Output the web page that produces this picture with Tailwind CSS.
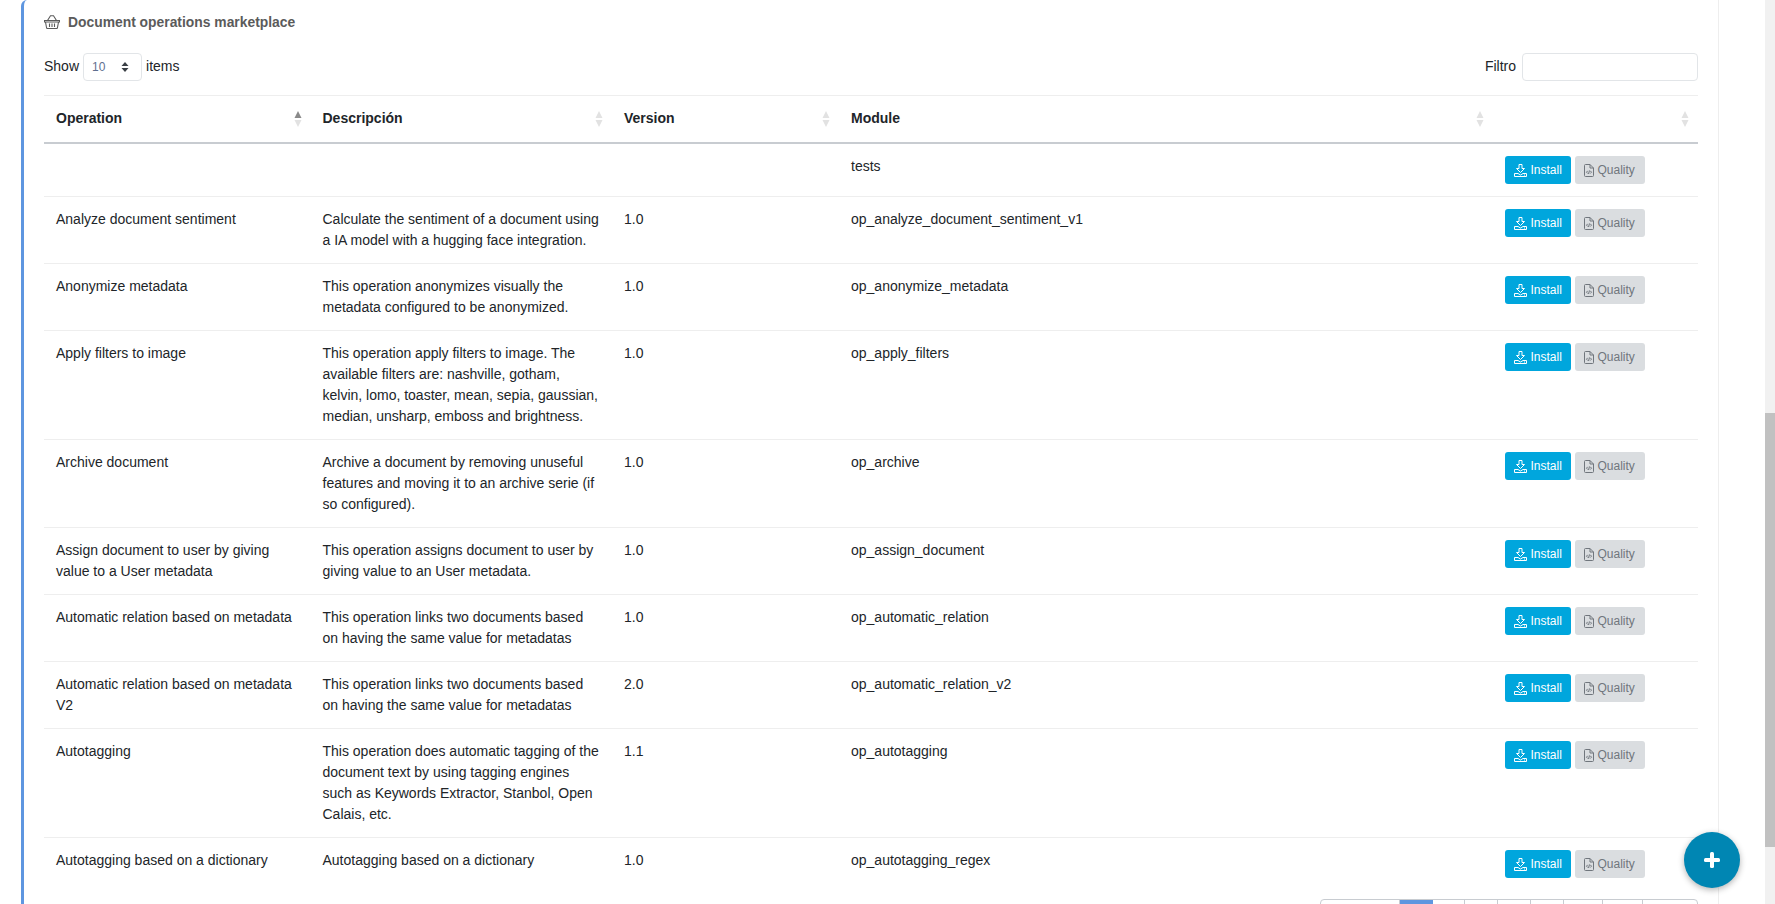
<!DOCTYPE html>
<html lang="es">
<head>
<meta charset="utf-8">
<script src="https://cdn.jsdelivr.net/npm/@tailwindcss/browser@4"></script>
<title>Document operations marketplace</title>
</head>
<body class="bg-white">
<div class="relative h-[904px] w-[1775px] overflow-hidden flex font-['Liberation_Sans',Arial,sans-serif] text-[14px] leading-[21px] text-[#212529]">
  <main class="ml-[21px] w-[1698px] h-[1000px] shrink-0 border-l-[3px] border-l-[#5e96e0] border-r border-r-[#eeeeee] rounded-tl-[6px] pl-[20px] pr-[20px]">
    <h2 class="h-[53px] pt-[12px] flex items-start gap-[8px] font-bold text-[13.86px] leading-[21px] text-[#5b5b5b]">
      <svg class="mt-[3px]" width="16" height="14" viewBox="0 0 16 14" fill="none" stroke="#5b5b5b" stroke-width="1.1"><path d="M.5 5.500h15v1.500H.5zM1.500 7l1 5.500a1 1 0 0 0 1 1h9a1 1 0 0 0 1-1l1-5.500M3.500 5.500 6.500 .8h3l3 4.700M5.500 8.500v3.500M8 8.500v3.500M10.500 8.500v3.500"/></svg>
      Document operations marketplace
    </h2>
    <div class="flex items-center justify-between h-[28px]">
      <div class="flex items-center gap-[4px]">
        <span class="mb-[2px]">Show</span>
        <span class="relative w-[59px] h-[28px] border border-[#e2e5e8] rounded-[4px] pl-[8px] text-[12px] leading-[26px] text-[#5f6f8f]">10
          <svg class="absolute left-[37px] top-[8px]" width="8" height="10" viewBox="0 0 8 10" fill="#3a3f45"><path d="M4 0l3.500 4H.5zM4 10 .5 6h7z"/></svg>
        </span>
        <span class="mb-[2px]">items</span>
      </div>
      <div class="flex items-center gap-[6px]">
        <span class="mb-[2px]">Filtro</span>
        <input aria-label="Filtro" class="w-[176px] h-[28px] border border-[#e2e5e8] rounded-[4px] bg-white">
      </div>
    </div>
    <table class="mt-[14px] w-[1654px] table-fixed border-separate border-spacing-0">
      <colgroup>
        <col class="w-[266.500px]"><col class="w-[301.500px]"><col class="w-[227px]"><col class="w-[654px]"><col class="w-[205px]">
      </colgroup>
      <thead>
        <tr class="text-left font-bold">
          <th class="relative border-t border-t-[#eeeeee] border-b-2 border-b-[#c8ccd1] p-[12px] pb-[13px]">Operation
            <svg class="absolute right-[9px] top-[15px]" width="8" height="16" viewBox="0 0 8 16"><path d="M4 0l3.500 7H.5z" fill="#8a8a8a"/><path d="M4 16 .5 9h7z" fill="#e2e2e2"/></svg>
          </th>
          <th class="relative border-t border-t-[#eeeeee] border-b-2 border-b-[#c8ccd1] p-[12px] pb-[13px]">Descripción
            <svg class="absolute right-[9px] top-[15px]" width="8" height="16" viewBox="0 0 8 16"><path d="M4 0l3.500 7H.5zM4 16 .5 9h7z" fill="#e2e2e2"/></svg>
          </th>
          <th class="relative border-t border-t-[#eeeeee] border-b-2 border-b-[#c8ccd1] p-[12px] pb-[13px]">Version
            <svg class="absolute right-[9px] top-[15px]" width="8" height="16" viewBox="0 0 8 16"><path d="M4 0l3.500 7H.5zM4 16 .5 9h7z" fill="#e2e2e2"/></svg>
          </th>
          <th class="relative border-t border-t-[#eeeeee] border-b-2 border-b-[#c8ccd1] p-[12px] pb-[13px]">Module
            <svg class="absolute right-[9px] top-[15px]" width="8" height="16" viewBox="0 0 8 16"><path d="M4 0l3.500 7H.5zM4 16 .5 9h7z" fill="#e2e2e2"/></svg>
          </th>
          <th class="relative border-t border-t-[#eeeeee] border-b-2 border-b-[#c8ccd1] p-[12px] pb-[13px]">
            <svg class="absolute right-[9px] top-[15px]" width="8" height="16" viewBox="0 0 8 16"><path d="M4 0l3.500 7H.5zM4 16 .5 9h7z" fill="#e2e2e2"/></svg>
          </th>
        </tr>
      </thead>
      <tbody class="[&_td]:border-b [&_td]:border-b-[#eeeeee] [&_td]:p-[12px] [&_td]:align-top">
        <tr><td></td><td></td><td></td><td>tests</td><td>
          <div class="flex gap-[4px]"><button class="flex items-center gap-[3.500px] h-[28px] w-[66px] pl-[9px] rounded-[3px] bg-[#00a6dd] text-white text-[12px]"><svg width="13" height="13" viewBox="0 0 13 13" fill="none" stroke="currentColor" stroke-width="1"><path d="M5 .5h3v4h2.500L6.500 8.500 2.500 4.500H5zM.5 9.500h3.500l2.500 1.500 2.500-1.500h3.500v3h-12zM10 11h1"/></svg>Install</button><button class="flex items-center gap-[3.500px] h-[28px] w-[70px] pl-[9px] rounded-[3px] bg-[#dadde0] text-[#70767d] text-[12px]"><svg width="10" height="13" viewBox="0 0 10 13" fill="none" stroke="currentColor" stroke-width="1"><path d="M1.500 .5h4.500l3.500 3.500v7.500a1 1 0 0 1-1 1h-7a1 1 0 0 1-1-1v-10a1 1 0 0 1 1-1zM6 .5V4h3.500M3.700 6.800 2.500 8.200l1.200 1.300M6.300 6.800l1.200 1.400-1.200 1.300M5.500 6.500l-1 3.500"/></svg>Quality</button></div>
        </td></tr>
        <tr><td>Analyze document sentiment</td><td>Calculate the sentiment of a document using a IA model with a hugging face integration.</td><td>1.0</td><td>op_analyze_document_sentiment_v1</td><td>
          <div class="flex gap-[4px]"><button class="flex items-center gap-[3.500px] h-[28px] w-[66px] pl-[9px] rounded-[3px] bg-[#00a6dd] text-white text-[12px]"><svg width="13" height="13" viewBox="0 0 13 13" fill="none" stroke="currentColor" stroke-width="1"><path d="M5 .5h3v4h2.500L6.500 8.500 2.500 4.500H5zM.5 9.500h3.500l2.500 1.500 2.500-1.500h3.500v3h-12zM10 11h1"/></svg>Install</button><button class="flex items-center gap-[3.500px] h-[28px] w-[70px] pl-[9px] rounded-[3px] bg-[#dadde0] text-[#70767d] text-[12px]"><svg width="10" height="13" viewBox="0 0 10 13" fill="none" stroke="currentColor" stroke-width="1"><path d="M1.500 .5h4.500l3.500 3.500v7.500a1 1 0 0 1-1 1h-7a1 1 0 0 1-1-1v-10a1 1 0 0 1 1-1zM6 .5V4h3.500M3.700 6.800 2.500 8.200l1.200 1.300M6.300 6.800l1.200 1.400-1.200 1.300M5.500 6.500l-1 3.500"/></svg>Quality</button></div>
        </td></tr>
        <tr><td>Anonymize metadata</td><td>This operation anonymizes visually the metadata configured to be anonymized.</td><td>1.0</td><td>op_anonymize_metadata</td><td>
          <div class="flex gap-[4px]"><button class="flex items-center gap-[3.500px] h-[28px] w-[66px] pl-[9px] rounded-[3px] bg-[#00a6dd] text-white text-[12px]"><svg width="13" height="13" viewBox="0 0 13 13" fill="none" stroke="currentColor" stroke-width="1"><path d="M5 .5h3v4h2.500L6.500 8.500 2.500 4.500H5zM.5 9.500h3.500l2.500 1.500 2.500-1.500h3.500v3h-12zM10 11h1"/></svg>Install</button><button class="flex items-center gap-[3.500px] h-[28px] w-[70px] pl-[9px] rounded-[3px] bg-[#dadde0] text-[#70767d] text-[12px]"><svg width="10" height="13" viewBox="0 0 10 13" fill="none" stroke="currentColor" stroke-width="1"><path d="M1.500 .5h4.500l3.500 3.500v7.500a1 1 0 0 1-1 1h-7a1 1 0 0 1-1-1v-10a1 1 0 0 1 1-1zM6 .5V4h3.500M3.700 6.800 2.500 8.200l1.200 1.300M6.300 6.800l1.200 1.400-1.200 1.300M5.500 6.500l-1 3.500"/></svg>Quality</button></div>
        </td></tr>
        <tr><td>Apply filters to image</td><td>This operation apply filters to image. The available filters are: nashville, gotham, kelvin, lomo, toaster, mean, sepia, gaussian, median, unsharp, emboss and brightness.</td><td>1.0</td><td>op_apply_filters</td><td>
          <div class="flex gap-[4px]"><button class="flex items-center gap-[3.500px] h-[28px] w-[66px] pl-[9px] rounded-[3px] bg-[#00a6dd] text-white text-[12px]"><svg width="13" height="13" viewBox="0 0 13 13" fill="none" stroke="currentColor" stroke-width="1"><path d="M5 .5h3v4h2.500L6.500 8.500 2.500 4.500H5zM.5 9.500h3.500l2.500 1.500 2.500-1.500h3.500v3h-12zM10 11h1"/></svg>Install</button><button class="flex items-center gap-[3.500px] h-[28px] w-[70px] pl-[9px] rounded-[3px] bg-[#dadde0] text-[#70767d] text-[12px]"><svg width="10" height="13" viewBox="0 0 10 13" fill="none" stroke="currentColor" stroke-width="1"><path d="M1.500 .5h4.500l3.500 3.500v7.500a1 1 0 0 1-1 1h-7a1 1 0 0 1-1-1v-10a1 1 0 0 1 1-1zM6 .5V4h3.500M3.700 6.800 2.500 8.200l1.200 1.300M6.300 6.800l1.200 1.400-1.200 1.300M5.500 6.500l-1 3.500"/></svg>Quality</button></div>
        </td></tr>
        <tr><td>Archive document</td><td>Archive a document by removing unuseful features and moving it to an archive serie (if so configured).</td><td>1.0</td><td>op_archive</td><td>
          <div class="flex gap-[4px]"><button class="flex items-center gap-[3.500px] h-[28px] w-[66px] pl-[9px] rounded-[3px] bg-[#00a6dd] text-white text-[12px]"><svg width="13" height="13" viewBox="0 0 13 13" fill="none" stroke="currentColor" stroke-width="1"><path d="M5 .5h3v4h2.500L6.500 8.500 2.500 4.500H5zM.5 9.500h3.500l2.500 1.500 2.500-1.500h3.500v3h-12zM10 11h1"/></svg>Install</button><button class="flex items-center gap-[3.500px] h-[28px] w-[70px] pl-[9px] rounded-[3px] bg-[#dadde0] text-[#70767d] text-[12px]"><svg width="10" height="13" viewBox="0 0 10 13" fill="none" stroke="currentColor" stroke-width="1"><path d="M1.500 .5h4.500l3.500 3.500v7.500a1 1 0 0 1-1 1h-7a1 1 0 0 1-1-1v-10a1 1 0 0 1 1-1zM6 .5V4h3.500M3.700 6.800 2.500 8.200l1.200 1.300M6.300 6.800l1.200 1.400-1.200 1.300M5.500 6.500l-1 3.500"/></svg>Quality</button></div>
        </td></tr>
        <tr><td>Assign document to user by giving value to a User metadata</td><td>This operation assigns document to user by giving value to an User metadata.</td><td>1.0</td><td>op_assign_document</td><td>
          <div class="flex gap-[4px]"><button class="flex items-center gap-[3.500px] h-[28px] w-[66px] pl-[9px] rounded-[3px] bg-[#00a6dd] text-white text-[12px]"><svg width="13" height="13" viewBox="0 0 13 13" fill="none" stroke="currentColor" stroke-width="1"><path d="M5 .5h3v4h2.500L6.500 8.500 2.500 4.500H5zM.5 9.500h3.500l2.500 1.500 2.500-1.500h3.500v3h-12zM10 11h1"/></svg>Install</button><button class="flex items-center gap-[3.500px] h-[28px] w-[70px] pl-[9px] rounded-[3px] bg-[#dadde0] text-[#70767d] text-[12px]"><svg width="10" height="13" viewBox="0 0 10 13" fill="none" stroke="currentColor" stroke-width="1"><path d="M1.500 .5h4.500l3.500 3.500v7.500a1 1 0 0 1-1 1h-7a1 1 0 0 1-1-1v-10a1 1 0 0 1 1-1zM6 .5V4h3.500M3.700 6.800 2.500 8.200l1.200 1.300M6.300 6.800l1.200 1.400-1.200 1.300M5.500 6.500l-1 3.500"/></svg>Quality</button></div>
        </td></tr>
        <tr><td>Automatic relation based on metadata</td><td>This operation links two documents based on having the same value for metadatas</td><td>1.0</td><td>op_automatic_relation</td><td>
          <div class="flex gap-[4px]"><button class="flex items-center gap-[3.500px] h-[28px] w-[66px] pl-[9px] rounded-[3px] bg-[#00a6dd] text-white text-[12px]"><svg width="13" height="13" viewBox="0 0 13 13" fill="none" stroke="currentColor" stroke-width="1"><path d="M5 .5h3v4h2.500L6.500 8.500 2.500 4.500H5zM.5 9.500h3.500l2.500 1.500 2.500-1.500h3.500v3h-12zM10 11h1"/></svg>Install</button><button class="flex items-center gap-[3.500px] h-[28px] w-[70px] pl-[9px] rounded-[3px] bg-[#dadde0] text-[#70767d] text-[12px]"><svg width="10" height="13" viewBox="0 0 10 13" fill="none" stroke="currentColor" stroke-width="1"><path d="M1.500 .5h4.500l3.500 3.500v7.500a1 1 0 0 1-1 1h-7a1 1 0 0 1-1-1v-10a1 1 0 0 1 1-1zM6 .5V4h3.500M3.700 6.800 2.500 8.200l1.200 1.300M6.300 6.800l1.200 1.400-1.200 1.300M5.500 6.500l-1 3.500"/></svg>Quality</button></div>
        </td></tr>
        <tr><td>Automatic relation based on metadata V2</td><td>This operation links two documents based on having the same value for metadatas</td><td>2.0</td><td>op_automatic_relation_v2</td><td>
          <div class="flex gap-[4px]"><button class="flex items-center gap-[3.500px] h-[28px] w-[66px] pl-[9px] rounded-[3px] bg-[#00a6dd] text-white text-[12px]"><svg width="13" height="13" viewBox="0 0 13 13" fill="none" stroke="currentColor" stroke-width="1"><path d="M5 .5h3v4h2.500L6.500 8.500 2.500 4.500H5zM.5 9.500h3.500l2.500 1.500 2.500-1.500h3.500v3h-12zM10 11h1"/></svg>Install</button><button class="flex items-center gap-[3.500px] h-[28px] w-[70px] pl-[9px] rounded-[3px] bg-[#dadde0] text-[#70767d] text-[12px]"><svg width="10" height="13" viewBox="0 0 10 13" fill="none" stroke="currentColor" stroke-width="1"><path d="M1.500 .5h4.500l3.500 3.500v7.500a1 1 0 0 1-1 1h-7a1 1 0 0 1-1-1v-10a1 1 0 0 1 1-1zM6 .5V4h3.500M3.700 6.800 2.500 8.200l1.200 1.300M6.300 6.800l1.200 1.400-1.200 1.300M5.500 6.500l-1 3.500"/></svg>Quality</button></div>
        </td></tr>
        <tr><td>Autotagging</td><td>This operation does automatic tagging of the document text by using tagging engines such as Keywords Extractor, Stanbol, Open Calais, etc.</td><td>1.1</td><td>op_autotagging</td><td>
          <div class="flex gap-[4px]"><button class="flex items-center gap-[3.500px] h-[28px] w-[66px] pl-[9px] rounded-[3px] bg-[#00a6dd] text-white text-[12px]"><svg width="13" height="13" viewBox="0 0 13 13" fill="none" stroke="currentColor" stroke-width="1"><path d="M5 .5h3v4h2.500L6.500 8.500 2.500 4.500H5zM.5 9.500h3.500l2.500 1.500 2.500-1.500h3.500v3h-12zM10 11h1"/></svg>Install</button><button class="flex items-center gap-[3.500px] h-[28px] w-[70px] pl-[9px] rounded-[3px] bg-[#dadde0] text-[#70767d] text-[12px]"><svg width="10" height="13" viewBox="0 0 10 13" fill="none" stroke="currentColor" stroke-width="1"><path d="M1.500 .5h4.500l3.500 3.500v7.500a1 1 0 0 1-1 1h-7a1 1 0 0 1-1-1v-10a1 1 0 0 1 1-1zM6 .5V4h3.500M3.700 6.800 2.500 8.200l1.200 1.300M6.300 6.800l1.200 1.400-1.200 1.300M5.500 6.500l-1 3.500"/></svg>Quality</button></div>
        </td></tr>
        <tr><td class="!border-b-0">Autotagging based on a dictionary</td><td class="!border-b-0">Autotagging based on a dictionary</td><td class="!border-b-0">1.0</td><td class="!border-b-0">op_autotagging_regex</td><td class="!border-b-0">
          <div class="flex gap-[4px]"><button class="flex items-center gap-[3.500px] h-[28px] w-[66px] pl-[9px] rounded-[3px] bg-[#00a6dd] text-white text-[12px]"><svg width="13" height="13" viewBox="0 0 13 13" fill="none" stroke="currentColor" stroke-width="1"><path d="M5 .5h3v4h2.500L6.500 8.500 2.500 4.500H5zM.5 9.500h3.500l2.500 1.500 2.500-1.500h3.500v3h-12zM10 11h1"/></svg>Install</button><button class="flex items-center gap-[3.500px] h-[28px] w-[70px] pl-[9px] rounded-[3px] bg-[#dadde0] text-[#70767d] text-[12px]"><svg width="10" height="13" viewBox="0 0 10 13" fill="none" stroke="currentColor" stroke-width="1"><path d="M1.500 .5h4.500l3.500 3.500v7.500a1 1 0 0 1-1 1h-7a1 1 0 0 1-1-1v-10a1 1 0 0 1 1-1zM6 .5V4h3.500M3.700 6.800 2.500 8.200l1.200 1.300M6.300 6.800l1.200 1.400-1.200 1.300M5.500 6.500l-1 3.500"/></svg>Quality</button></div>
        </td></tr>
      </tbody>
    </table>
    <nav class="mt-[9px] flex justify-end">
      <div class="flex h-[34px] border border-[#c8ccd1] rounded-[4px] overflow-hidden text-[12px] [&>a]:border-r [&>a]:border-r-[#c8ccd1] [&>a]:flex [&>a]:items-center [&>a]:justify-center">
        <a class="w-[79px]">Previous</a><a class="w-[33px] bg-[#5e96e0] text-white !border-r-0">1</a><a class="w-[32px]">2</a><a class="w-[33px]">3</a><a class="w-[33px]">4</a><a class="w-[33px]">5</a><a class="w-[39px]">...</a><a class="w-[40px]">61</a><a class="w-[54px] !border-r-0">Next</a>
      </div>
    </nav>
  </main>
  <div class="absolute right-0 top-0 w-[10px] h-full bg-[#f1f1f1]">
    <div class="mt-[413px] h-[434px] bg-[#c1c1c1]"></div>
  </div>
  <button aria-label="Add" class="absolute left-[1684px] top-[832px] w-[56px] h-[56px] rounded-full bg-[#0086b3] shadow-[0_2px_6px_rgba(0,0,0,0.3)] flex items-center justify-center">
    <svg width="16" height="16" viewBox="0 0 16 16" fill="#ffffff"><rect x="6" y="0" width="4" height="16" rx="1.500"/><rect x="0" y="6" width="16" height="4" rx="1.500"/></svg>
  </button>
</div>
</body>
</html>
